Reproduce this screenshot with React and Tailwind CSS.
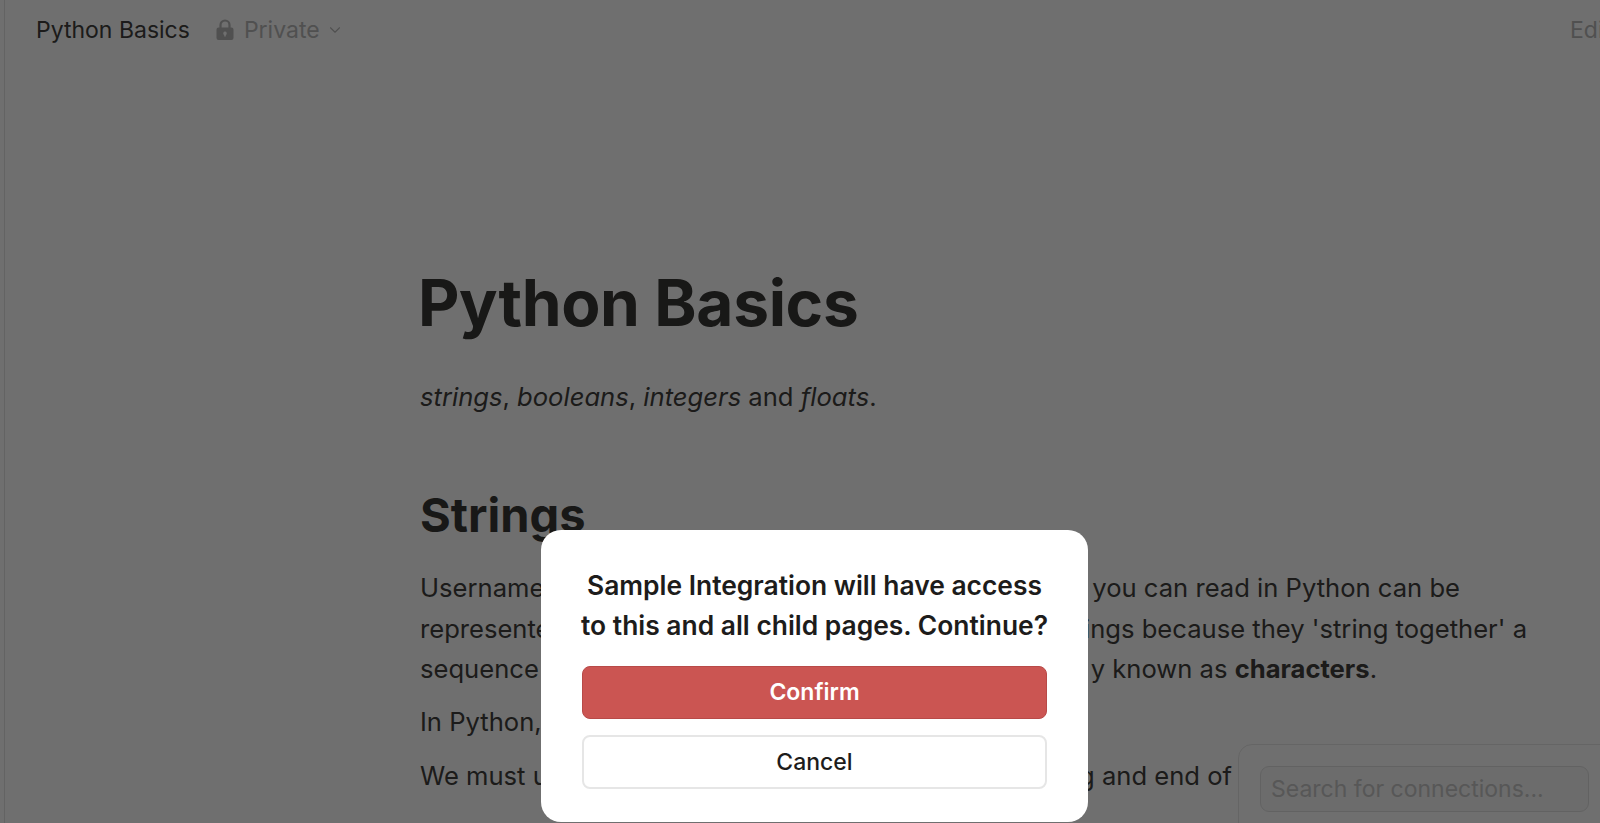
import { ChevronDown } from 'lucide-react'

const font = { fontFamily: 'Inter, "Liberation Sans", sans-serif' }

const LockIcon = () => (
  <svg width="18" height="22" viewBox="0 0 18 22" className="text-[#b8b8b8]" fill="none">
    <path d="M4.5 9V6a4.5 4.5 0 0 1 9 0v3" stroke="currentColor" strokeWidth="2.2" />
    <path
      fillRule="evenodd"
      fill="currentColor"
      d="M2.5 8.5h13A2 2 0 0 1 17.5 10.5v8.5a2 2 0 0 1-2 2h-13a2 2 0 0 1-2-2v-8.5a2 2 0 0 1 2-2zM9 12.5a1.8 1.8 0 0 0-.8 3.4v1.6h1.6v-1.6A1.8 1.8 0 0 0 9 12.5z"
    />
  </svg>
)

// the middle of these lines sits behind the dialog
const Line = ({ w, left, right }) => (
  <div style={{ width: w }} className="flex justify-between whitespace-nowrap">
    <span>{left}</span>
    <span>{right}</span>
  </div>
)

const App = () => {
  return (
    <div style={font} className="relative h-[823px] w-full overflow-hidden bg-white text-[#403e3c]">
      <div className="ml-[4px] h-full border-l border-[#e4e4e4]">
        {/* Top bar */}
        <header className="flex h-[60px] items-center justify-between pl-[31px]">
          <div className="flex items-center">
            <span className="text-[23px]">Python Basics</span>
            <div className="ml-[26px] flex items-center text-[#b8b8b8]">
              <LockIcon />
              <span className="ml-[10px] text-[23px]">Private</span>
              <ChevronDown size={18} strokeWidth={1.5} className="ml-[6px]" />
            </div>
          </div>
          <span className="w-[30px] overflow-hidden text-[23px] text-[#b8b8b8]">Edit</span>
        </header>

        {/* Page content */}
        <main className="pl-[415px]">
          <h1 className="mt-[205px] -ml-[2px] text-[64px] leading-[76px] font-bold tracking-[-0.35px] text-[#393735]">
            Python Basics
          </h1>
          <p className="mt-[36px] text-[25.6px] leading-[40px]">
            <em>strings</em>, <em>booleans</em>, <em>integers</em> and <em>floats</em>.
          </p>
          <h2 className="mt-[68px] text-[47px] leading-[60px] font-bold text-[#393735]">Strings</h2>
          <div className="mt-[23px] text-[25.6px] leading-[40.5px]">
            <Line w="1040px" left="Usernames, passwords and anything else" right="you can read in Python can be" />
            <Line w="1107px" left="represented as strings. We call them strings" right="ings because they 'string together' a" />
            <Line w="957px" left="sequence of individual letters, commonly" right={<>y known as <b>characters</b>.</>} />
            <p className="mt-[12px]">In Python, strings are written in quotes.</p>
            <div className="mt-[14px]">
              <Line w="812px" left="We must use quote marks at the beginning" right="g and end of" />
            </div>
          </div>
        </main>
      </div>

      {/* Connections menu */}
      <div className="absolute top-[744px] left-[1238px] h-[120px] w-[400px] rounded-tl-[14px] border border-[#e8e8e8] bg-white p-[21px]">
        <div className="flex h-[46px] w-[329px] items-center rounded-[9px] border border-[#e2e2e2] bg-[#f8f8f8] pl-[10px] text-[23px] text-[#c8c8c8]">
          Search for connections...
        </div>
      </div>

      {/* Dim overlay */}
      <div className="absolute inset-0 bg-black/[.565]" />

      {/* Dialog */}
      <div className="absolute top-[530px] left-[541px] flex h-[292px] w-[547px] flex-col items-center rounded-[20px] bg-white pt-[35px] text-[#1d1c1b]">
        <p className="text-center text-[26.4px] leading-[40px] font-semibold whitespace-nowrap">
          Sample Integration will have access
          <br />
          to this and all child pages. Continue?
        </p>
        <button className="mt-[21px] h-[53px] w-[465px] rounded-[8px] border border-[#b84a48] bg-[#cb5552] text-[23px] font-semibold text-white">
          Confirm
        </button>
        <button className="mt-[16px] h-[54px] w-[465px] rounded-[8px] border-2 border-[#e6e6e6] bg-white text-[23px] font-medium text-[#1d1c1b]">
          Cancel
        </button>
      </div>
    </div>
  )
}

export default App
